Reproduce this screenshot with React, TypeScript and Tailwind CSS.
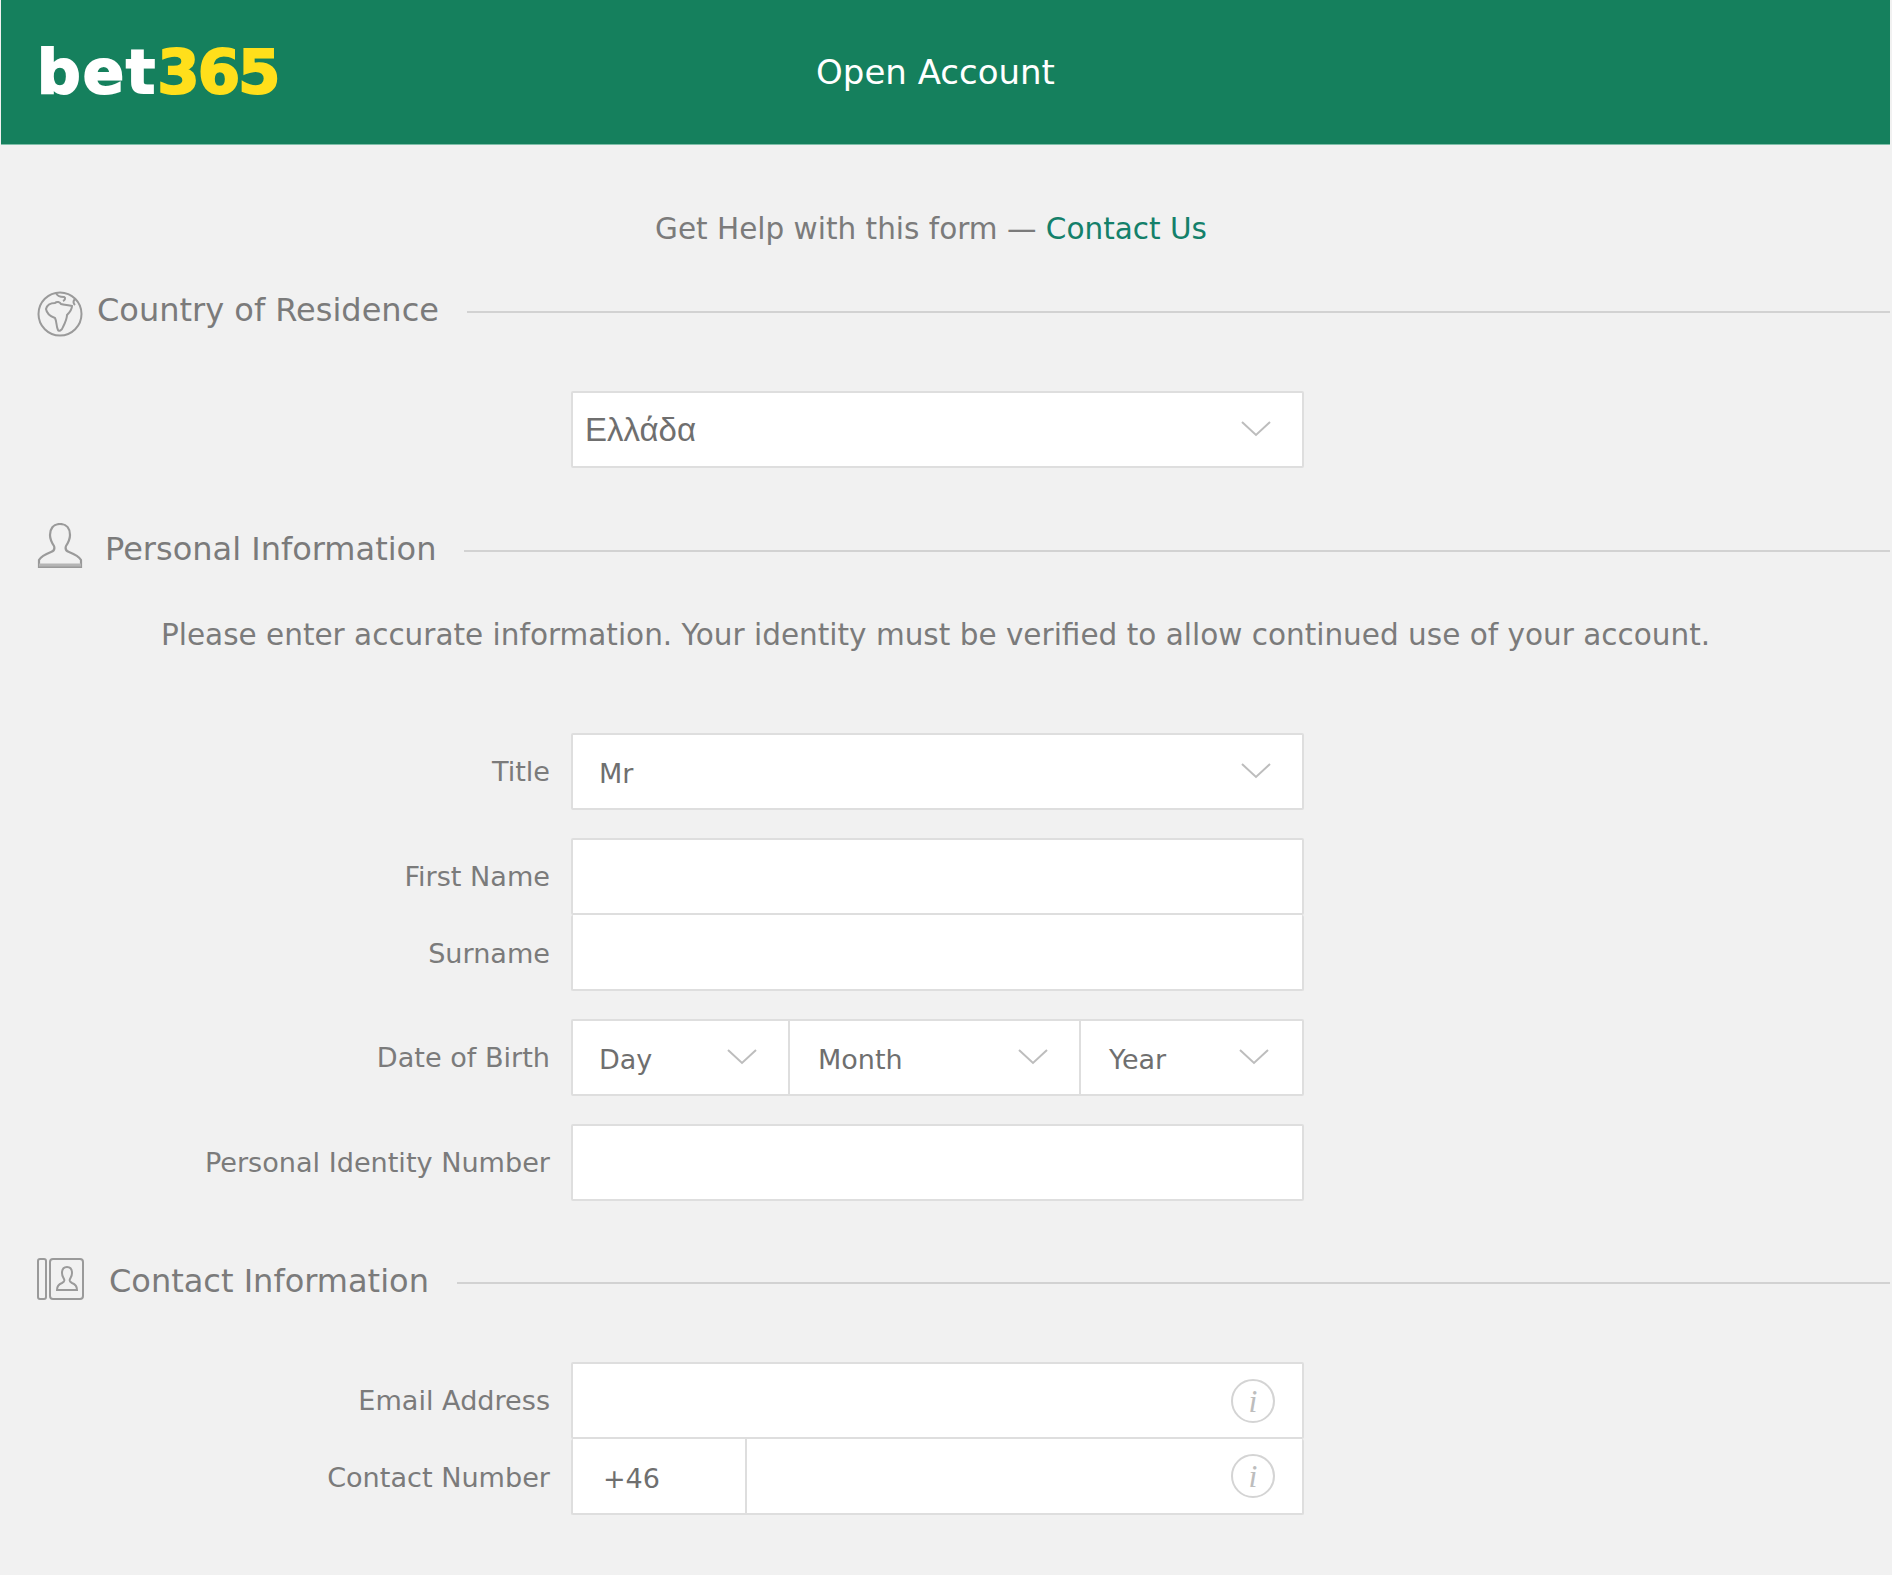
import React from "react";

const font = "font-['DejaVu_Sans',sans-serif]";

const Chevron = () => (
  <svg width="32" height="18" viewBox="0 0 32 18" fill="none" className="mb-[2px] shrink-0">
    <polyline points="2,2 16,15 30,2" stroke="#bdbdbd" strokeWidth="2" />
  </svg>
);

const InfoIcon = () => (
  <span className="flex h-[44px] w-[44px] items-center justify-center rounded-full border-2 border-[#d4d4d4] font-['Liberation_Serif',serif] text-[32px] italic leading-none text-[#bdbdbd]">
    i
  </span>
);

const GlobeIcon = () => (
  <svg width="46" height="46" viewBox="0 0 46 46" fill="none" stroke="#9a9a9a" strokeWidth="2" className="mt-[4px] shrink-0">
    <circle cx="23" cy="23" r="21.5" />
    <path d="M9 18C10 14 14 12 18 12C20 10 23 11 24 13C27 14 31 14 35 15C35 19 32 22 30 24C30 28 28 32 26 36C25 39 22 41 21 39C19 35 20 31 18 27C15 26 10 24 9 18Z" />
    <path d="M19 2C20 5 24 6 27 6C29 7 28 9 26 10" />
    <path d="M38 8C36 10 36 12 38 14" />
  </svg>
);

const PersonIcon = () => (
  <svg width="46" height="46" viewBox="0 0 46 46" fill="none" stroke="#9a9a9a" strokeWidth="2.2" className="mb-[10px] shrink-0">
    <path d="M23 1C16 1 13 6 13 12C13 17 15 20 17 23C18 26 17 28 14 29C9 31 4 33 2 37V44H44V37C42 33 37 31 32 29C29 28 28 26 29 23C31 20 33 17 33 12C33 6 30 1 23 1Z" />
    <path d="M2 42H44" stroke="#b5b5b5" strokeWidth="3" />
  </svg>
);

const ContactIcon = () => (
  <svg width="47" height="42" viewBox="0 0 47 42" fill="none" stroke="#9a9a9a" strokeWidth="2" className="mb-[8px] shrink-0">
    <rect x="1" y="1" width="8" height="40" rx="2" />
    <rect x="13" y="1" width="33" height="40" rx="3" />
    <path d="M30 9C26 9 25 12 25 15C25 18 26 19 27 21C28 23 27 24 25 25C22 26 20 28 20 32H40C40 28 38 26 35 25C33 24 32 23 33 21C34 19 35 18 35 15C35 12 34 9 30 9Z" />
  </svg>
);

const SectionHeading = ({ icon, title, gap }: { icon: React.ReactNode; title: string; gap: string }) => (
  <div className="flex h-[46px] items-center pl-[36px]">
    <div className={`flex items-center ${gap}`}>
      {icon}
      <span className="mb-[4px] text-[32px] leading-none text-[#7b7b7b]">{title}</span>
    </div>
    <div className="ml-[28px] h-[2px] flex-1 bg-[#d2d2d2]" />
  </div>
);

const Row = ({ label, children }: { label?: string; children: React.ReactNode }) => (
  <div className="flex">
    <div className="w-[570px] shrink-0 pr-[21px] pt-[3px] text-right text-[27.1px] leading-[72px] text-[#7b7b7b]">{label}</div>
    <div className="w-[733px]">{children}</div>
  </div>
);

const Box = ({ children, className = "h-[77px]" }: { children?: React.ReactNode; className?: string }) => (
  <div className={`flex items-center rounded-[2px] border-2 border-[#dedede] bg-white ${className}`}>{children}</div>
);

const SelectCell = ({ text, className }: { text: string; className: string }) => (
  <div className={`flex h-full items-center justify-between ${className}`}>
    <span className="pt-[6px] text-[27px] text-[#6f6f6f]">{text}</span>
    <Chevron />
  </div>
);

export default function App() {
  return (
    <div className={`min-h-[1575px] bg-[#f1f1f1] pl-[1px] pr-[2px] ${font}`}>
      <header className="grid h-[145px] grid-cols-[1fr_auto_1fr] items-center border-b border-[#7fbfa9] bg-[#15805d]">
        <div className="-mt-[2px] pl-[36px] text-[61px] font-bold leading-none">
          <span className="tracking-[2px] text-white [-webkit-text-stroke:2px_#ffffff]">bet</span>
          <span className="tracking-[-2px] text-[#ffdf1b] [-webkit-text-stroke:2px_#ffdf1b]">365</span>
        </div>
        <div className="mr-[20px] mt-[1px] text-[34px] text-white">Open Account</div>
        <div />
      </header>

      <p className="mt-[65px] pr-[29px] text-center text-[29.5px] leading-[38px] text-[#7b7b7b]">
        Get Help with this form — <span className="text-[#14806a]">Contact Us</span>
      </p>

      <div className="mt-[41px]">
        <SectionHeading icon={<GlobeIcon />} title="Country of Residence" gap="gap-[14px]" />
      </div>

      <div className="mt-[56px]">
        <Row>
          <Box className="h-[77px] justify-between pl-[12px] pr-[30px]">
            <span className="font-['Liberation_Sans',sans-serif] text-[33px] text-[#6f6f6f]">Ελλάδα</span>
            <Chevron />
          </Box>
        </Row>
      </div>

      <div className="mt-[60px]">
        <SectionHeading icon={<PersonIcon />} title="Personal Information" gap="gap-[22px]" />
      </div>

      <p className="mt-[42px] pr-[20px] text-center text-[29.5px] leading-[38px] text-[#7b7b7b]">
        Please enter accurate information. Your identity must be verified to allow continued use of your account.
      </p>

      <div className="mt-[79px] flex flex-col gap-[28px]">
        <Row label="Title">
          <Box>
            <SelectCell text="Mr" className="w-full pl-[26px] pr-[30px]" />
          </Box>
        </Row>
        <div>
          <Row label="First Name">
            <Box />
          </Row>
          <Row label="Surname">
            <Box className="h-[76px] border-t-0" />
          </Row>
        </div>
        <Row label="Date of Birth">
          <Box>
            <SelectCell text="Day" className="w-[217px] border-r-2 border-[#dedede] pl-[26px] pr-[30px]" />
            <SelectCell text="Month" className="w-[291px] border-r-2 border-[#dedede] pl-[28px] pr-[30px]" />
            <SelectCell text="Year" className="flex-1 pl-[28px] pr-[32px]" />
          </Box>
        </Row>
        <Row label="Personal Identity Number">
          <Box />
        </Row>
      </div>

      <div className="mt-[59px]">
        <SectionHeading icon={<ContactIcon />} title="Contact Information" gap="gap-[25px]" />
      </div>

      <div className="mt-[56px]">
        <Row label="Email Address">
          <Box className="h-[77px] justify-end pr-[27px]">
            <InfoIcon />
          </Box>
        </Row>
        <Row label="Contact Number">
          <Box className="h-[76px] border-t-0 pr-[27px]">
            <div className="flex h-full w-[174px] items-center border-r-2 border-[#dedede] pl-[30px]">
              <span className="pt-[6px] text-[27px] text-[#6f6f6f]">+46</span>
            </div>
            <div className="flex flex-1 justify-end">
              <InfoIcon />
            </div>
          </Box>
        </Row>
      </div>
    </div>
  );
}
